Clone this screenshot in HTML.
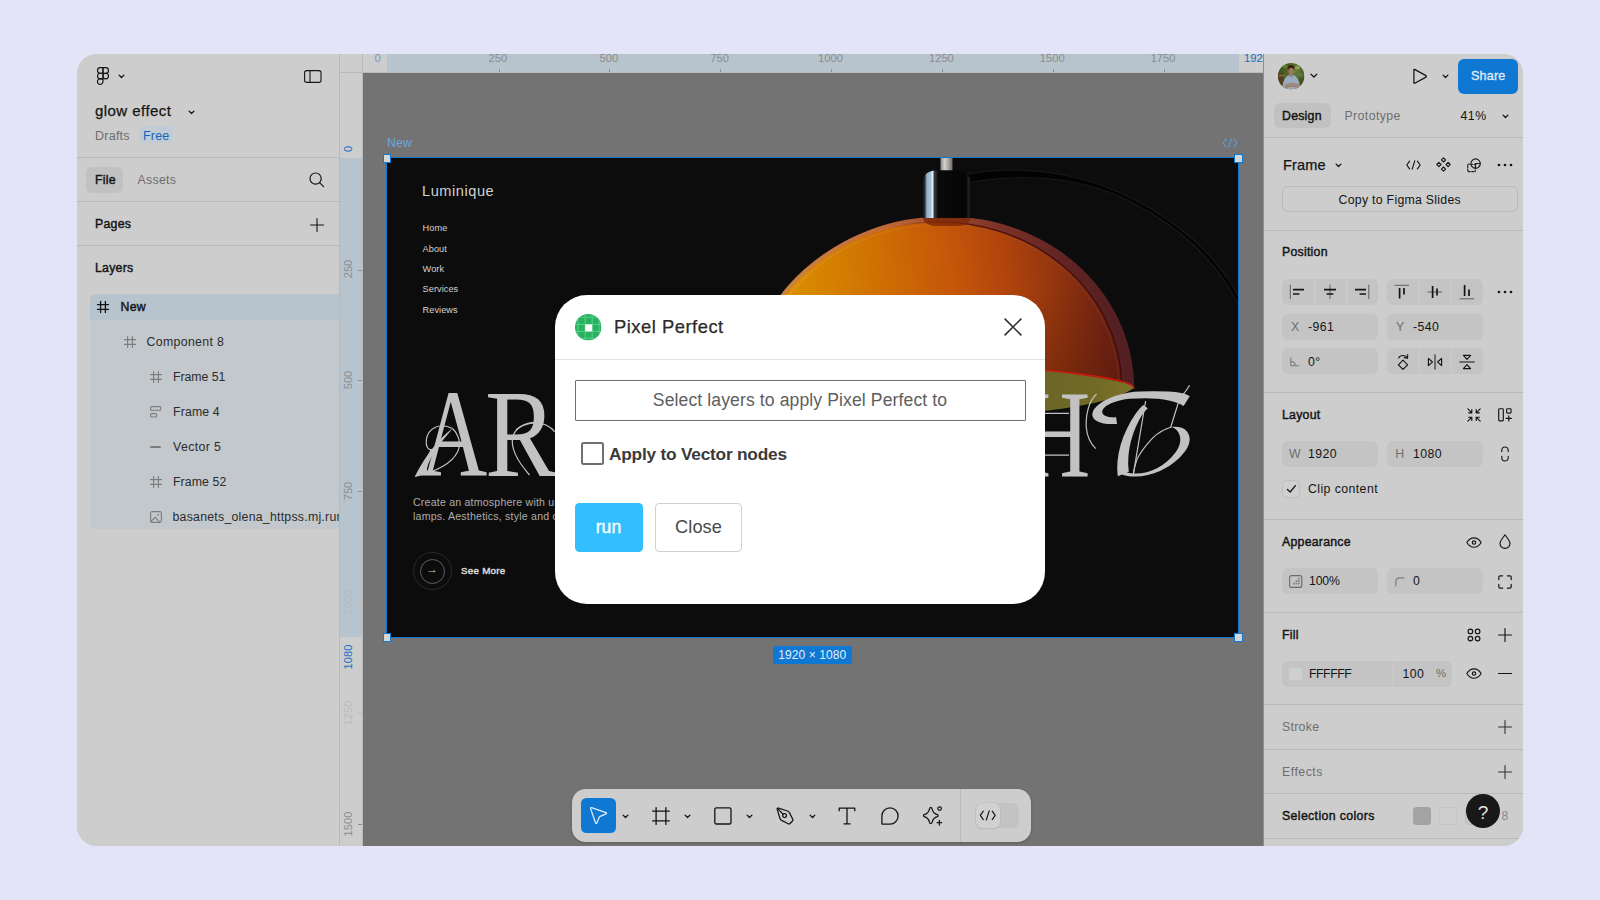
<!DOCTYPE html>
<html lang="en">
<head>
<meta charset="utf-8">
<title>Pixel Perfect – Figma plugin</title>
<style>
*{box-sizing:border-box;margin:0;padding:0}
html,body{width:1600px;height:900px;overflow:hidden}
body{background:#e3e4f8;font-family:"Liberation Sans",sans-serif;position:relative;color:#141414;font-size:12px}
.abs{position:absolute}
#win{position:absolute;left:77px;top:54px;width:1446px;height:792px;border-radius:20px;overflow:hidden;background:#cdcdcd}
/* everything inside #win is positioned in PAGE coordinates via this shifted layer */
#pg{position:absolute;left:-77px;top:-54px;width:1600px;height:900px}
.t{position:absolute;white-space:nowrap;line-height:1;transform:translateY(-50%)}
.b{font-weight:normal;-webkit-text-stroke:.42px currentColor;letter-spacing:.25px !important}
.bb{font-weight:bold}
.g{color:#6e6e6e}
.hl{position:absolute;height:1px;background:#b9b9b9}
.vl{position:absolute;width:1px;background:#b9b9b9}
.fld{position:absolute;height:26px;border-radius:6px;background:#c4c4c4}
svg{position:absolute;overflow:visible}
.ic{stroke:#141414;fill:none;stroke-width:1.1;stroke-linecap:round;stroke-linejoin:round}
.icg{stroke:#7c7c7c;fill:none;stroke-width:1.1;stroke-linecap:round;stroke-linejoin:round}
/* rulers */
.rt{position:absolute;font-size:11.2px;color:#8d8d8d;line-height:1;white-space:nowrap}
.rh{transform:translate(-50%,0)}
.rv{transform:translate(-50%,-50%) rotate(-90deg)}
.nv{font-size:9.2px;letter-spacing:.05px;color:#d2d2d2}
.hd{position:absolute;top:372px;font-family:"Liberation Serif",serif;font-size:125px;line-height:1;color:#c2c2c2;transform:scaleX(.78);transform-origin:0 0;white-space:nowrap}
/* modal */
#modal{position:absolute;left:555px;top:295px;width:490px;height:309px;border-radius:32px;background:#fff}
</style>
</head>
<body>
<div id="win"><div id="pg">

<!-- ================= LEFT PANEL ================= -->
<div id="left" class="abs" style="left:77px;top:54px;width:262px;height:792px;background:#cdcdcd"></div>
<div class="vl" style="left:339px;top:54px;height:792px"></div>
<!--LEFT-BEGIN-->
<!-- figma logo -->
<svg style="left:97px;top:67px" width="12" height="18" viewBox="0 0 12 18"><g style="stroke-width:1.15" class="ic"><path d="M6,.6H3.3a2.8,2.8 0 0 0 0,5.6H6Z"/><path d="M6,.6H8.7a2.8,2.8 0 0 1 0,5.6H6Z"/><path d="M6,6.2H3.3a2.8,2.8 0 0 0 0,5.6H6Z"/><circle cx="8.7" cy="9" r="2.8"/><path d="M6,11.8H3.3a2.8,2.8 0 1 0 2.7,2.8Z"/></g></svg>
<svg style="left:117.5px;top:74px" width="7" height="5" viewBox="0 0 7 5"><path style="stroke-width:1.3" class="ic" d="M1.1,1.1 3.5,3.5 5.9,1.1"/></svg>
<!-- sidebar toggle -->
<svg style="left:304px;top:70px" width="18" height="13" viewBox="0 0 18 13"><rect class="ic" x=".6" y=".6" width="16.4" height="11.8" rx="2.2"/><path class="ic" d="M6,.6V12.4"/></svg>
<div class="t" style="left:95px;top:110.3px;font-size:15px;letter-spacing:.45px;-webkit-text-stroke:.25px #141414">glow effect</div>
<svg style="left:187.5px;top:109.5px" width="7" height="5" viewBox="0 0 7 5"><path style="stroke-width:1.3" class="ic" d="M1.1,1.1 3.5,3.5 5.9,1.1"/></svg>
<div class="t g" style="left:95px;top:135.5px;font-size:12.5px;letter-spacing:.25px">Drafts</div>
<div class="abs" style="left:139px;top:126px;width:34px;height:17px;border-radius:4px;background:#c0cbd6"></div>
<div class="t" style="left:143px;top:135.5px;font-size:12.5px;letter-spacing:.2px;color:#1266b8">Free</div>
<div class="hl" style="left:77px;top:157px;width:262px"></div>
<!-- tabs -->
<div class="abs" style="left:86px;top:167px;width:37px;height:25.5px;border-radius:6px;background:#c1c1c1"></div>
<div class="t b" style="left:95px;top:180px;font-size:12.3px;letter-spacing:.15px">File</div>
<div class="t g" style="left:137.5px;top:180px;font-size:12.3px;letter-spacing:.3px">Assets</div>
<svg style="left:308.5px;top:171.5px" width="16" height="16" viewBox="0 0 16 16"><circle style="stroke-width:1.2" class="ic" cx="6.6" cy="6.6" r="5.6"/><path style="stroke-width:1.2" class="ic" d="M10.8,10.8 14.6,14.6"/></svg>
<div class="hl" style="left:77px;top:201px;width:262px"></div>
<div class="t b" style="left:95px;top:224px;font-size:12.3px;letter-spacing:.15px">Pages</div>
<svg style="left:310px;top:217.5px" width="14" height="14" viewBox="0 0 14 14"><path class="ic" d="M7,.5V13.5M.5,7H13.5"/></svg>
<div class="hl" style="left:77px;top:245px;width:262px"></div>
<div class="t b" style="left:95px;top:268px;font-size:12.3px;letter-spacing:.15px">Layers</div>
<!-- layer rows -->
<div class="abs" style="left:90px;top:294px;width:249px;height:235px;border-radius:6px 0 0 6px;background:#c3c8cd"></div>
<div class="abs" style="left:90px;top:294px;width:249px;height:26px;border-radius:6px 0 0 0;background:#b7c3cd"></div>
<svg style="left:97px;top:301px" width="12" height="12" viewBox="0 0 12 12"><path style="stroke-width:1.3" class="ic" d="M3.6,.5V11.5M8.4,.5V11.5M.5,3.6H11.5M.5,8.4H11.5"/></svg>
<div class="t b" style="left:120.5px;top:307px;font-size:12.3px;letter-spacing:.15px">New</div>
<svg style="left:123.5px;top:336px" width="12" height="12" viewBox="0 0 12 12"><path class="icg" d="M3.6,.5V11.5M8.4,.5V11.5M.5,3.6H11.5M.5,8.4H11.5"/></svg>
<div class="t" style="left:146.5px;top:342px;font-size:12.3px;letter-spacing:.35px;color:#2b2b2b">Component 8</div>
<svg style="left:149.5px;top:371px" width="12" height="12" viewBox="0 0 12 12"><path class="icg" d="M3.6,.5V11.5M8.4,.5V11.5M.5,3.6H11.5M.5,8.4H11.5"/></svg>
<div class="t" style="left:173px;top:377px;font-size:12.3px;letter-spacing:-.05px;color:#2b2b2b">Frame 51</div>
<svg style="left:149.5px;top:405.5px" width="12" height="12" viewBox="0 0 12 12"><rect class="icg" x=".6" y=".6" width="10.2" height="3.6" rx="1"/><rect class="icg" x=".6" y="7.6" width="6" height="3.4" rx="1"/></svg>
<div class="t" style="left:173px;top:412px;font-size:12.3px;letter-spacing:.15px;color:#2b2b2b">Frame 4</div>
<div class="abs" style="left:150px;top:446px;width:11px;height:1.6px;border-radius:1px;background:#7c7c7c"></div>
<div class="t" style="left:173px;top:447px;font-size:12.3px;letter-spacing:.4px;color:#2b2b2b">Vector 5</div>
<svg style="left:149.5px;top:475.5px" width="12" height="12" viewBox="0 0 12 12"><path class="icg" d="M3.6,.5V11.5M8.4,.5V11.5M.5,3.6H11.5M.5,8.4H11.5"/></svg>
<div class="t" style="left:173px;top:481.5px;font-size:12.3px;letter-spacing:.1px;color:#2b2b2b">Frame 52</div>
<svg style="left:149.5px;top:510.5px" width="12" height="12" viewBox="0 0 12 12"><rect class="icg" x=".6" y=".6" width="10.8" height="10.8" rx="1.6"/><path class="icg" d="M.8,10.6 5.2,6.2 9.6,11.2"/><circle cx="8.2" cy="3.8" r=".9" fill="#7c7c7c"/></svg>
<div class="abs" style="left:172.5px;top:506px;width:166.5px;height:22px;overflow:hidden"><div class="t" style="left:0;top:10.5px;font-size:12.3px;letter-spacing:.25px;color:#2b2b2b">basanets_olena_httpss.mj.run</div></div>
<!--LEFT-END-->

<!-- ================= RULERS + CANVAS ================= -->
<div class="abs" style="left:363px;top:73px;width:901px;height:773px;background:#737373"></div>
<div class="abs" style="left:340px;top:54px;width:924px;height:18px;background:#cdcdcd"></div>
<div class="abs" style="left:340px;top:54px;width:22px;height:792px;background:#cdcdcd"></div>
<div class="hl" style="left:340px;top:72px;width:924px"></div>
<div class="vl" style="left:362px;top:54px;height:792px"></div>
<!--RULER-BEGIN-->
<div class="abs" style="left:387px;top:54px;width:851.5px;height:18px;background:#b7c3cd"></div>
<div class="abs" style="left:340px;top:158px;width:22px;height:479px;background:#b7c3cd"></div>
<div class="rt rh" style="left:497.9px;top:53px">250</div>
<div class="abs" style="left:498.5px;top:68.5px;width:1px;height:3.5px;background:#8a8f94"></div>
<div class="rt rh" style="left:608.8px;top:53px">500</div>
<div class="abs" style="left:609.3px;top:68.5px;width:1px;height:3.5px;background:#8a8f94"></div>
<div class="rt rh" style="left:719.6px;top:53px">750</div>
<div class="abs" style="left:720.2px;top:68.5px;width:1px;height:3.5px;background:#8a8f94"></div>
<div class="rt rh" style="left:830.5px;top:53px">1000</div>
<div class="abs" style="left:831.1px;top:68.5px;width:1px;height:3.5px;background:#8a8f94"></div>
<div class="rt rh" style="left:941.4px;top:53px">1250</div>
<div class="abs" style="left:942.0px;top:68.5px;width:1px;height:3.5px;background:#8a8f94"></div>
<div class="rt rh" style="left:1052.3px;top:53px">1500</div>
<div class="abs" style="left:1052.9px;top:68.5px;width:1px;height:3.5px;background:#8a8f94"></div>
<div class="rt rh" style="left:1163.1px;top:53px">1750</div>
<div class="abs" style="left:1163.7px;top:68.5px;width:1px;height:3.5px;background:#8a8f94"></div>
<div class="rt" style="left:374.5px;top:53px;color:#6d9bcb">0</div>
<div class="abs" style="left:1244px;top:53px;width:19.5px;height:14px;overflow:hidden"><div class="rt" style="left:0;top:0;color:#1571c9">1920</div></div>
<div class="rt rv" style="left:348.5px;top:269.4px;color:#8d8d8d">250</div>
<div class="abs" style="left:358px;top:269.6px;width:3.5px;height:1px;background:#8a8f94"></div>
<div class="rt rv" style="left:348.5px;top:380.2px;color:#8d8d8d">500</div>
<div class="abs" style="left:358px;top:380.4px;width:3.5px;height:1px;background:#8a8f94"></div>
<div class="rt rv" style="left:348.5px;top:491.1px;color:#8d8d8d">750</div>
<div class="abs" style="left:358px;top:491.3px;width:3.5px;height:1px;background:#8a8f94"></div>
<div class="rt rv" style="left:348.5px;top:602.0px;color:#b2bcc4">1000</div>
<div class="abs" style="left:358px;top:602.2px;width:3.5px;height:1px;background:#b5b9bd"></div>
<div class="rt rv" style="left:348.5px;top:712.9px;color:#bcbcbc">1250</div>
<div class="abs" style="left:358px;top:713.1px;width:3.5px;height:1px;background:#b5b9bd"></div>
<div class="rt rv" style="left:348.5px;top:823.8px;color:#8d8d8d">1500</div>
<div class="abs" style="left:358px;top:824.0px;width:3.5px;height:1px;background:#8a8f94"></div>
<div class="rt rv" style="left:348.5px;top:149px;color:#1571c9">0</div>
<div class="rt rv" style="left:348.5px;top:656.5px;color:#1571c9">1080</div>
<!--RULER-END-->

<!--CANVAS-BEGIN-->
<!-- frame label -->
<div class="t" style="left:387px;top:143px;font-size:12.3px;letter-spacing:.2px;color:#6ea6da">New</div>
<svg style="left:1221.5px;top:137.6px" width="16" height="10" viewBox="0 0 16 10"><path d="M4,1.2 1,5 4,8.8M12,1.2 15,5 12,8.8M9.4,.8 6.6,9.2" fill="none" stroke="#5d9ad6" stroke-width="1.2" stroke-linecap="round" stroke-linejoin="round"/></svg>
<!-- frame -->
<div id="frame" class="abs" style="left:387px;top:158px;width:851.5px;height:479px;background:#0c0c0c;overflow:hidden">
<svg style="left:-387px;top:-158px" width="1600" height="900" viewBox="0 0 1600 900">
<defs>
<linearGradient id="gd" gradientUnits="userSpaceOnUse" x1="770" y1="330" x2="1140" y2="300">
<stop offset="0" stop-color="#e09a00"/><stop offset=".16" stop-color="#d68400"/><stop offset=".36" stop-color="#cd6a04"/><stop offset=".52" stop-color="#c4560a"/><stop offset=".66" stop-color="#b0440c"/><stop offset=".8" stop-color="#90340f"/><stop offset=".92" stop-color="#702212"/><stop offset="1" stop-color="#5e1b18"/>
</linearGradient>
<radialGradient id="gsh" gradientUnits="userSpaceOnUse" cx="1075" cy="440" r="150">
<stop offset="0" stop-color="#3a0d08" stop-opacity=".5"/><stop offset="1" stop-color="#3a0d08" stop-opacity="0"/>
</radialGradient>
<linearGradient id="gcap" x1="0" x2="1" y1="0" y2="0">
<stop offset="0" stop-color="#0e0e0e"/><stop offset=".05" stop-color="#2b3238"/><stop offset=".09" stop-color="#8fb0c8"/><stop offset=".17" stop-color="#a9c6dc"/><stop offset=".21" stop-color="#e6eef4"/><stop offset=".245" stop-color="#3a3d40"/><stop offset=".33" stop-color="#0a0a0a"/><stop offset=".9" stop-color="#050505"/><stop offset=".96" stop-color="#222226"/><stop offset="1" stop-color="#0c0c0c"/>
</linearGradient>
<linearGradient id="grod" x1="0" x2="1" y1="0" y2="0">
<stop offset="0" stop-color="#8d8a85"/><stop offset=".35" stop-color="#d4d1cc"/><stop offset=".7" stop-color="#a39f99"/><stop offset="1" stop-color="#6e6b66"/>
</linearGradient>
<linearGradient id="gin" gradientUnits="userSpaceOnUse" x1="1040" y1="0" x2="1135" y2="0">
<stop offset="0" stop-color="#6c6627"/><stop offset=".6" stop-color="#716a26"/><stop offset="1" stop-color="#7d7428"/>
</linearGradient>
<clipPath id="cpd"><path d="M700,150 H1200 V386 L1134.1,385.8 C1124,382 1095,375 1045,370.5 C1000,366.5 900,372 740,432 L700,445Z"/></clipPath>
<linearGradient id="gb" gradientUnits="userSpaceOnUse" x1="770" y1="0" x2="1140" y2="0">
<stop offset="0" stop-color="#cc8a3a"/><stop offset=".2" stop-color="#c87a42"/><stop offset=".4" stop-color="#c0683a"/><stop offset=".55" stop-color="#a24c30"/><stop offset=".7" stop-color="#7e3228"/><stop offset=".85" stop-color="#622424"/><stop offset="1" stop-color="#501e22"/>
</linearGradient>
<linearGradient id="gs" gradientUnits="userSpaceOnUse" x1="900" y1="0" x2="1000" y2="0">
<stop offset="0" stop-color="#3d0b0b" stop-opacity="0"/><stop offset="1" stop-color="#3d0b0b" stop-opacity=".95"/>
</linearGradient>
<linearGradient id="gs2" gradientUnits="userSpaceOnUse" x1="760" y1="0" x2="1130" y2="0">
<stop offset="0" stop-color="#e0b060" stop-opacity=".55"/><stop offset=".4" stop-color="#d89050" stop-opacity=".25"/><stop offset=".65" stop-color="#a05038" stop-opacity=".2"/><stop offset="1" stop-color="#7a3a30" stop-opacity=".5"/>
</linearGradient>
</defs>
<!-- cable -->
<path d="M968,173.6 C1010,165.9 1070,168.4 1125.500,194.800 C1181,221 1222.200,260.600 1242.200,303 L1237.800,305 C1217.800,263.400 1179,225.200 1124.500,199.200 C1070,173.600 1010,175.100 968,183.400Z" fill="#1f1b1e"/>
<path d="M968,174.400 C1010,166.700 1070,169.200 1125,195.600 C1180,221.600 1221.400,261 1241.400,303.400 L1238.600,304.600 C1218.600,262.900 1180,224.400 1125,198.400 C1070,172.800 1010,174.300 968,182.600Z" fill="#030303"/>
<!-- rod -->
<rect x="940.5" y="158" width="12" height="14" fill="url(#grod)"/>
<!-- interior -->
<path d="M1000,366 C1030,368 1090,374 1120,381 C1130,383.5 1134.5,386 1134,388 C1120,398 1092,405 1045,411 L1000,414Z" fill="url(#gin)"/>
<!-- dome -->
<g clip-path="url(#cpd)">
<ellipse cx="938.7" cy="395.4" rx="196.15" ry="178.64" transform="rotate(-10.56 938.7 395.4)" fill="url(#gb)"/>
<ellipse cx="937.2" cy="389.3" rx="184.6" ry="167.3" transform="rotate(-2.58 937.2 389.3)" fill="url(#gd)"/>
<ellipse cx="937.2" cy="389.3" rx="184.6" ry="167.3" transform="rotate(-2.58 937.2 389.3)" fill="url(#gsh)"/>
<ellipse cx="937.2" cy="389.3" rx="184.6" ry="167.3" transform="rotate(-2.58 937.2 389.3)" fill="none" stroke="url(#gs)" stroke-width="1.4"/>
<ellipse cx="937.2" cy="389.3" rx="181.8" ry="164.5" transform="rotate(-2.58 937.2 389.3)" fill="none" stroke="url(#gs2)" stroke-width="1"/>
</g>
<!-- rim -->
<path d="M1000,366.5 C1030,368 1090,374 1120,381 C1130,383.5 1134.5,386 1134,388.5" fill="none" stroke="#c8180e" stroke-width="1.7"/>
<!-- cap -->
<path d="M922.500,184 C922.500,173 929,170.300 940,170.300 H953 C964,170.300 970.700,173 970.700,184 V218 H922.500Z" fill="url(#gcap)"/>
<path d="M923,218 H970.5 V219 Q968,226 958,226 H936 Q926,226 923,219Z" fill="#7a2404" opacity=".75"/>
</svg>
<!--FT-BEGIN-->
<div class="abs" style="left:-387px;top:-158px;width:1600px;height:900px;color:#c2c2c2">
<div class="t" style="left:422px;top:190.5px;font-size:14.6px;letter-spacing:.55px;color:#d0d0d0">Luminique</div>
<div class="t nv" style="left:422.6px;top:229.1px">Home</div>
<div class="t nv" style="left:422.6px;top:249.6px">About</div>
<div class="t nv" style="left:422.6px;top:269.9px">Work</div>
<div class="t nv" style="left:422.6px;top:290.3px">Services</div>
<div class="t nv" style="left:422.6px;top:310.6px">Reviews</div>
<!-- headline -->
<div class="hd" style="left:420px;transform:scaleX(.745)">A</div>
<div class="hd" style="left:484.5px;transform:scaleX(.86)">R</div>
<div class="hd" style="left:553px">C</div>
<div class="hd" style="left:1019.5px">H</div>
<div class="hd" style="left:1086px;top:388.5px;font-family:'DejaVu Math TeX Gyre','DejaVu Serif',serif;font-size:100px;transform:matrix(1.1,0,-.1,1.08,0,0)">𝒯</div>
<svg style="left:0;top:0" width="1600" height="900" viewBox="0 0 1600 900">
<g fill="none" stroke="#c2c2c2" stroke-width="1.2">
<!-- A swash -->
<path d="M452.5,428.5 C440,422 428,428 426.3,440 C425.5,447 428.5,450.5 432,449.5"/>
<path d="M452.5,428.5 C459,435 461.5,444 457.5,452 C451,465 434,472 415,476.5"/>
<path d="M426.5,471.5 C425.5,463 428,456 431,450"/>
<!-- H crossbars -->
<path d="M1030,413.3H1069M1030,434.3H1069M1030,455.2H1069"/>
<!-- R / C hairline loops -->
<path d="M536,422 C525,422.5 515,428 512.8,437 C510,449 519,463 529.5,475"/><path d="M516,430 C524,423 536,421 546,425 C550,426.800 553,429.500 555,432"/>
<!-- T ornaments -->
<path d="M1189.6,385.2 C1186,391 1183,395 1180,397.4 L1170.8,427"/>
<path d="M1145.6,401 L1133.3,474.7"/>
<path d="M1096.5,394 C1089,401 1085.5,414 1086.3,427.8 C1087.2,437 1091,444 1095.7,448.7"/>
<path d="M1171.6,427 C1164,429 1158,433 1152.8,437.9 C1146,445 1140,453 1136.9,459.6 C1135,465 1133.8,470 1133.3,474.7"/>
</g>
<!-- A leaf (thick) -->
<path d="M415,476.6 C420,466 427,455 434,446.5 C440,439 446,433 452.5,428.5 C447,435.5 441,442 436,449.5 C431,457 427,465.5 426.3,472.5 C422.5,474 419,475.5 415,476.6Z" fill="#c2c2c2"/>
<!-- T bowl (ornamental loop) -->
<path d="M1118,472.5 C1122,475 1126,476 1131,476.4 C1141,477.2 1151,475 1160,471 C1169,467 1177,461 1183,453.8 C1187.5,448.5 1190,443 1189.6,437.9 C1189,433 1186,429.5 1181.7,427.8 C1178.5,426.6 1175,426.5 1171.6,427 C1176,428.5 1179.500,432 1180.200,437.900 C1180.8,443 1178.5,448.5 1174.4,453.8 C1170,459.5 1164,464.5 1157,468.200 C1149,472.5 1140,474.300 1131,473.300 C1127,472.800 1123,471 1120,468.500Z" fill="#c2c2c2"/>
</svg>
<div class="t" style="left:413px;top:502px;font-size:10.6px;letter-spacing:.2px;color:#adadad">Create an atmosphere with unique</div>
<div class="t" style="left:413px;top:516px;font-size:10.6px;letter-spacing:.2px;color:#adadad">lamps. Aesthetics, style and comfort</div>
<div class="abs" style="left:413.2px;top:551.7px;width:38.5px;height:38.5px;border-radius:50%;border:1px solid #292929"></div>
<div class="abs" style="left:420px;top:558.5px;width:25px;height:25px;border-radius:50%;border:1px solid #5e5e5e"></div>
<div class="t" style="left:432px;top:570.3px;transform:translate(-50%,-50%);font-size:11.5px;color:#cfcfcf">→</div>
<div class="t b" style="left:461px;top:571px;font-size:9.8px;letter-spacing:.05px;color:#dedede">See More</div>
</div>
<!--FT-END-->
</div>
<!-- selection outline + handles -->
<div class="abs" style="left:385.8px;top:157px;width:853.4px;height:480.8px;border:1.3px solid #1079d3"></div>
<div class="abs" style="left:382.6px;top:154.2px;width:8.4px;height:8.4px;background:#d6d6d6;border:1.3px solid #1079d3"></div>
<div class="abs" style="left:1234.4px;top:154.2px;width:8.4px;height:8.4px;background:#d6d6d6;border:1.3px solid #1079d3"></div>
<div class="abs" style="left:382.6px;top:633.4px;width:8.4px;height:8.4px;background:#d6d6d6;border:1.3px solid #1079d3"></div>
<div class="abs" style="left:1234.4px;top:633.4px;width:8.4px;height:8.4px;background:#d6d6d6;border:1.3px solid #1079d3"></div>
<!-- size badge -->
<div class="abs" style="left:773px;top:645.5px;width:78.5px;height:18.5px;border-radius:2.5px;background:#0e78d2"></div>
<div class="t" style="left:812.3px;top:655px;transform:translate(-50%,-50%);font-size:12px;letter-spacing:.1px;color:#e4eef8">1920 × 1080</div>
<!--CANVAS-END-->

<!-- ================= RIGHT PANEL ================= -->
<div class="abs" style="left:1264px;top:54px;width:259px;height:792px;background:#cdcdcd"></div>
<div class="vl" style="left:1263px;top:54px;height:792px;background:#8f8f8f"></div>
<!--RIGHT-BEGIN-->
<!-- avatar -->
<svg style="left:1277.7px;top:62.7px" width="26.4" height="26.4" viewBox="0 0 26.4 26.4">
<defs><clipPath id="cpa"><circle cx="13.2" cy="13.2" r="13.2"/></clipPath>
<radialGradient id="gav" cx=".62" cy=".3" r=".8"><stop offset="0" stop-color="#6c8736"/><stop offset=".5" stop-color="#465c20"/><stop offset="1" stop-color="#2e3b18"/></radialGradient></defs>
<g clip-path="url(#cpa)"><rect width="26.4" height="26.4" fill="url(#gav)"/>
<ellipse cx="19.5" cy="4.500" rx="2.600" ry="2" fill="#9db86a" opacity=".7"/><ellipse cx="7" cy="3.500" rx="2.400" ry="1.600" fill="#6f8f3a" opacity=".7"/>
<ellipse cx="22" cy="12" rx="3.500" ry="2" fill="#5e7a5a" opacity=".7"/>
<path d="M0,9 5,11 6,26.400H0Z" fill="#5a3d22" opacity=".85"/>
<path d="M1,11.500H8V13.500H1Z" fill="#7f8a4a" opacity=".6"/>
<ellipse cx="13" cy="5" rx="3.400" ry="2.900" fill="#3a2219"/>
<ellipse cx="13.100" cy="8" rx="2.700" ry="3.300" fill="#a27562"/>
<path d="M9.700,5.600 C10.500,3.600 15.500,3.400 16.300,5.600 C15,4.900 11,5 9.700,5.600Z" fill="#3a2219"/>
<path d="M4.300,26.400 C4.400,17 8.200,11.600 13.100,11.800 C18.400,11.600 22,17 22.300,26.400Z" fill="#9aabc0"/>
<path d="M11.500,11.300 13.100,14.600 14.800,11.300Z" fill="#a27562"/>
<path d="M11.500,11.300 13.100,14.600 10.600,13.400ZM14.800,11.300 13.100,14.600 15.700,13.400Z" fill="#8192ab"/>
<path d="M6.600,21.600 C10,19.600 17,19.600 21.900,21.600 L21.500,25.200 C17,23.700 11,23.700 7.400,25.700Z" fill="#a58068"/>
<path d="M7,22.400 C11,20.800 16,21 20.800,22.600" fill="none" stroke="#8a9bb3" stroke-width=".9"/></g></svg>
<svg style="left:1309.6px;top:73.2px" width="8" height="6" viewBox="0 0 8 6"><path style="stroke-width:1.3" class="ic" d="M.9,1.100 3.900,4 6.900,1.100"/></svg>
<!-- play -->
<svg style="left:1412.5px;top:68px" width="15" height="17" viewBox="0 0 15 17"><path style="stroke-width:1.25" class="ic" d="M1.6,1.4 Q.9,1 .9,1.9 V14.7 Q.9,15.6 1.7,15.2 L13,9.1 Q13.8,8.3 13,7.6Z"/></svg>
<svg style="left:1441.5px;top:74px" width="7" height="5" viewBox="0 0 7 5"><path style="stroke-width:1.3" class="ic" d="M1.1,1.1 3.5,3.5 5.9,1.1"/></svg>
<div class="abs" style="left:1458.4px;top:59px;width:59.6px;height:34.6px;border-radius:6px;background:#0e78d2"></div>
<div class="t" style="left:1488.2px;top:76.1px;transform:translate(-50%,-50%);font-size:12.6px;letter-spacing:.2px;color:#e2ecf6;-webkit-text-stroke:.3px #e2ecf6">Share</div>
<!-- tabs -->
<div class="abs" style="left:1273.6px;top:102.6px;width:57.4px;height:25.6px;border-radius:6px;background:#c1c1c1"></div>
<div class="t b" style="left:1282px;top:115.8px;font-size:12.3px;letter-spacing:.1px">Design</div>
<div class="t g" style="left:1344.5px;top:115.8px;font-size:12.3px;letter-spacing:.4px">Prototype</div>
<div class="t" style="left:1460.5px;top:115.8px;font-size:12.3px;letter-spacing:.5px">41%</div>
<svg style="left:1501.5px;top:113.5px" width="7" height="5" viewBox="0 0 7 5"><path style="stroke-width:1.3" class="ic" d="M1.1,1.1 3.5,3.5 5.9,1.1"/></svg>
<div class="hl" style="left:1264px;top:137px;width:259px"></div>
<!-- Frame header -->
<div class="t" style="left:1283px;top:164.5px;font-size:14.5px;letter-spacing:.15px;-webkit-text-stroke:.25px #141414">Frame</div>
<svg style="left:1334.5px;top:162.5px" width="7" height="5" viewBox="0 0 7 5"><path style="stroke-width:1.3" class="ic" d="M1.1,1.1 3.5,3.5 5.9,1.1"/></svg>
<svg style="left:1405.5px;top:159.5px" width="15" height="10" viewBox="0 0 15 10"><path style="stroke-width:1.15" class="ic" d="M3.6,1.2 .8,5 3.6,8.8M11.4,1.2 14.2,5 11.4,8.8M8.8,.8 6.2,9.2"/></svg>
<svg style="left:1436px;top:157px" width="15" height="15" viewBox="0 0 15 15"><g style="stroke-width:1.1" class="ic"><path d="M7.5,.8 9.6,2.9 7.5,5 5.4,2.9Z"/><path d="M7.5,10 9.6,12.1 7.5,14.2 5.4,12.1Z"/><path d="M2.9,5.4 5,7.5 2.9,9.6 .8,7.5Z"/><path d="M12.1,5.4 14.2,7.5 12.1,9.6 10,7.5Z"/></g></svg>
<svg style="left:1467px;top:157.5px" width="15" height="15" viewBox="0 0 15 15"><g style="stroke-width:1.1" class="ic"><circle cx="8.6" cy="5.6" r="4.7"/><path d="M8.6,5.6V10.3M8.6,5.6H13.3" stroke-width="1"/><rect x=".8" y="6.2" width="7.4" height="7.4" stroke-dasharray="1.8 1.5"/></g></svg>
<svg style="left:1497px;top:162.5px" width="16" height="4" viewBox="0 0 16 4"><g fill="#141414"><circle cx="2" cy="2" r="1.35"/><circle cx="8" cy="2" r="1.35"/><circle cx="14" cy="2" r="1.35"/></g></svg>
<div class="abs" style="left:1282px;top:186.4px;width:235.6px;height:25.4px;border-radius:6px;border:1px solid #bbb"></div>
<div class="t" style="left:1399.8px;top:199.9px;transform:translate(-50%,-50%);font-size:12.3px;letter-spacing:.28px">Copy to Figma Slides</div>
<div class="hl" style="left:1264px;top:230px;width:259px"></div>
<!-- Position -->
<div class="t b" style="left:1282px;top:252.4px;font-size:12.3px;letter-spacing:.1px">Position</div>
<div class="fld" style="left:1282px;top:278.6px;width:96px"></div>
<div class="fld" style="left:1387px;top:278.6px;width:96px"></div>
<div class="vl" style="left:1313.6px;top:278.6px;height:26px;background:#cdcdcd"></div><div class="vl" style="left:1346px;top:278.6px;height:26px;background:#cdcdcd"></div>
<div class="vl" style="left:1418.6px;top:278.6px;height:26px;background:#cdcdcd"></div><div class="vl" style="left:1451px;top:278.6px;height:26px;background:#cdcdcd"></div>
<svg style="left:1289px;top:284px" width="16" height="16" viewBox="0 0 16 16"><path d="M1.3,1V14.6" style="stroke:#555;stroke-width:.9" class="ic"/><path style="stroke-width:1.7;stroke-linecap:butt" class="ic" d="M4,5.6H15M4,10H10.4"/></svg>
<svg style="left:1322px;top:284px" width="16" height="16" viewBox="0 0 16 16"><path d="M8,1V14.6" style="stroke:#555;stroke-width:.9" class="ic"/><path style="stroke-width:1.7;stroke-linecap:butt" class="ic" d="M2,5.6H14M4.6,10H11.4"/></svg>
<svg style="left:1354px;top:284px" width="16" height="16" viewBox="0 0 16 16"><path d="M14.8,1V14.6" style="stroke:#555;stroke-width:.9" class="ic"/><path style="stroke-width:1.7;stroke-linecap:butt" class="ic" d="M1,5.6H12M5.6,10H12"/></svg>
<svg style="left:1394px;top:283.5px" width="16" height="16" viewBox="0 0 16 16"><path d="M1,1.3H14.6" style="stroke:#555;stroke-width:.9" class="ic"/><path style="stroke-width:1.7;stroke-linecap:butt" class="ic" d="M5.6,4V14.6M10,4V10.4"/></svg>
<svg style="left:1426.5px;top:283.5px" width="16" height="16" viewBox="0 0 16 16"><path d="M1,8H14.6" style="stroke:#555;stroke-width:.9" class="ic"/><path style="stroke-width:1.7;stroke-linecap:butt" class="ic" d="M5.6,2V14M10,4.6V11.4"/></svg>
<svg style="left:1459px;top:283.5px" width="16" height="16" viewBox="0 0 16 16"><path d="M1,14.8H14.6" style="stroke:#555;stroke-width:.9" class="ic"/><path style="stroke-width:1.7;stroke-linecap:butt" class="ic" d="M5.6,1V12M10,5.6V12"/></svg>
<svg style="left:1497px;top:289.5px" width="16" height="4" viewBox="0 0 16 4"><g fill="#141414"><circle cx="2" cy="2" r="1.35"/><circle cx="8" cy="2" r="1.35"/><circle cx="14" cy="2" r="1.35"/></g></svg>
<div class="fld" style="left:1282px;top:313.6px;width:96px"></div>
<div class="fld" style="left:1387px;top:313.6px;width:96px"></div>
<div class="t g" style="left:1291px;top:326.9px;font-size:12.3px">X</div><div class="t" style="left:1308px;top:326.9px;font-size:12.3px;letter-spacing:.45px">-961</div>
<div class="t g" style="left:1396px;top:326.9px;font-size:12.3px">Y</div><div class="t" style="left:1413px;top:326.9px;font-size:12.3px;letter-spacing:.45px">-540</div>
<div class="fld" style="left:1282px;top:348.4px;width:96px"></div>
<div class="fld" style="left:1387px;top:348.4px;width:96px"></div>
<div class="vl" style="left:1418.6px;top:348.4px;height:26px;background:#cdcdcd"></div><div class="vl" style="left:1451px;top:348.4px;height:26px;background:#cdcdcd"></div>
<svg style="left:1290px;top:356.5px" width="10" height="10" viewBox="0 0 10 10"><path style="stroke-width:1.1" class="icg" d="M.8,.8V8.8H8.8M.8,4.4 Q5,4.6 5.2,8.8"/></svg>
<div class="t" style="left:1308px;top:361.7px;font-size:12.3px;letter-spacing:.4px">0°</div>
<svg style="left:1394.5px;top:352.5px" width="16" height="18" viewBox="0 0 16 18"><g style="stroke-width:1.15" class="ic"><path d="M8,7.2 12.6,11.8 8,16.4 3.4,11.8Z"/><path d="M3.6,5 C5.4,1.6 10.6,1.6 12.4,5"/><path d="M12.7,1.6 12.5,5.1 9.2,4.6"/></g></svg>
<svg style="left:1427px;top:353.5px" width="16" height="16" viewBox="0 0 16 16"><g style="stroke-width:1.15" class="ic"><path d="M8,.8V15.2" stroke-width="1"/><path d="M1.4,4.4V11.6L5.4,8Z"/><path d="M14.6,4.4V11.6L10.6,8Z"/></g></svg>
<svg style="left:1459px;top:353.5px" width="16" height="16" viewBox="0 0 16 16"><g style="stroke-width:1.15" class="ic"><path d="M.8,8H15.2" stroke-width="1"/><path d="M4.4,1.4H11.6L8,5.4Z"/><path d="M4.4,14.6H11.6L8,10.6Z"/></g></svg>
<div class="hl" style="left:1264px;top:392px;width:259px"></div>
<!-- Layout -->
<div class="t b" style="left:1282px;top:415px;font-size:12.3px;letter-spacing:.1px">Layout</div>
<svg style="left:1467px;top:408px" width="14" height="14" viewBox="0 0 14 14"><g style="stroke-width:1.15" class="ic"><path d="M.8,.8 4.6,4.6M1.6,4.8H4.8V1.6"/><path d="M13.2,.8 9.4,4.6M12.4,4.8H9.2V1.6"/><path d="M.8,13.2 4.6,9.4M1.6,9.2H4.8V12.4"/><path d="M13.2,13.2 9.4,9.4M12.400,9.2H9.2V12.4"/></g></svg>
<svg style="left:1497.5px;top:408px" width="15" height="14" viewBox="0 0 15 14"><g style="stroke-width:1.15" class="ic"><rect x=".7" y=".7" width="4.6" height="12.2" rx=".8"/><rect x="8.6" y=".7" width="4.4" height="4.4" rx=".8"/><path d="M10.8,7.8V13M8.2,10.4H13.4"/></g></svg>
<div class="fld" style="left:1282px;top:441px;width:96px"></div>
<div class="fld" style="left:1387px;top:441px;width:96px"></div>
<div class="t g" style="left:1289px;top:454.2px;font-size:12.3px">W</div><div class="t" style="left:1308px;top:454.2px;font-size:12.3px;letter-spacing:.45px">1920</div>
<div class="t g" style="left:1395.3px;top:454.2px;font-size:12.3px">H</div><div class="t" style="left:1413px;top:454.2px;font-size:12.3px;letter-spacing:.45px">1080</div>
<svg style="left:1501px;top:446px" width="8" height="16" viewBox="0 0 8 16"><g style="stroke-width:1.15" class="ic"><path d="M.8,5.6V4.2A3.2,3.2 0 0 1 7.2,4.2V5.6"/><path d="M.8,10.4V11.8A3.2,3.2 0 0 0 7.2,11.8V10.4"/></g></svg>
<div class="abs" style="left:1282px;top:480px;width:17.6px;height:17.6px;border-radius:4.5px;background:#cfcfcf;border:1px solid #bebebe"></div>
<svg style="left:1285.5px;top:484px" width="11" height="10" viewBox="0 0 11 10"><path style="stroke-width:1.3" class="ic" d="M1.4,5.4 4.2,8 9.4,1.6"/></svg>
<div class="t" style="left:1308px;top:489.2px;font-size:12.3px;letter-spacing:.42px">Clip content</div>
<div class="hl" style="left:1264px;top:519px;width:259px"></div>
<!-- Appearance -->
<div class="t b" style="left:1282px;top:542.2px;font-size:12.3px;letter-spacing:.05px">Appearance</div>
<svg style="left:1465.5px;top:536.5px" width="16" height="11" viewBox="0 0 16 11"><g style="stroke-width:1.15" class="ic"><path d="M.8,5.5 C3,2 5.5,.8 8,.8 C10.500,.8 13,2 15.2,5.5 C13,9 10.500,10.2 8,10.200 C5.5,10.2 3,9 .8,5.5Z"/><circle cx="8" cy="5.5" r="1.7"/></g></svg>
<svg style="left:1499px;top:534px" width="12" height="15" viewBox="0 0 12 15"><path style="stroke-width:1.15" class="ic" d="M6,.9 C8.600,4.2 11,7 11,9.4 A5,5 0 0 1 1,9.4 C1,7 3.4,4.2 6,.9Z"/></svg>
<div class="fld" style="left:1282px;top:568px;width:96px"></div>
<div class="fld" style="left:1387px;top:568px;width:96px"></div>
<svg style="left:1289px;top:575px" width="14" height="13" viewBox="0 0 14 13"><rect style="stroke:#6a6a6a" class="icg" x=".6" y=".6" width="12.200" height="11.800" rx="2"/><g fill="#7a7a7a"><rect x="9" y="3" width="1.6" height="1.6"/><rect x="6.600" y="5.400" width="1.6" height="1.6"/><rect x="9" y="5.400" width="1.6" height="1.6"/><rect x="4.200" y="7.800" width="1.6" height="1.6"/><rect x="6.600" y="7.800" width="1.6" height="1.6"/><rect x="9" y="7.800" width="1.6" height="1.6"/></g></svg>
<div class="t" style="left:1309px;top:581.3px;font-size:12.3px;letter-spacing:-.2px">100%</div>
<svg style="left:1395px;top:576.5px" width="10" height="10" viewBox="0 0 10 10"><path style="stroke-width:1.15" class="icg" d="M.8,9V4.800Q.8,.8 4.800,.8H9"/></svg>
<div class="t" style="left:1413px;top:581.3px;font-size:12.3px;letter-spacing:.4px">0</div>
<svg style="left:1497.5px;top:574.5px" width="14" height="14" viewBox="0 0 14 14"><g style="stroke-width:1.2" class="ic"><path d="M.8,4.600V2.200Q.8,.8 2.200,.8H4.600"/><path d="M9.400,.8H11.800Q13.200,.8 13.200,2.200V4.600"/><path d="M13.200,9.400V11.800Q13.200,13.200 11.800,13.200H9.400"/><path d="M4.600,13.200H2.200Q.8,13.200 .8,11.800V9.400"/></g></svg>
<div class="hl" style="left:1264px;top:612.4px;width:259px"></div>
<!-- Fill -->
<div class="t b" style="left:1282px;top:634.6px;font-size:12.3px;letter-spacing:.1px">Fill</div>
<svg style="left:1467px;top:627.500px" width="14" height="14" viewBox="0 0 14 14"><g style="stroke-width:1.15" class="ic"><circle cx="3.400" cy="3.400" r="2.300"/><circle cx="10.600" cy="3.400" r="2.300"/><circle cx="3.400" cy="10.600" r="2.300"/><circle cx="10.600" cy="10.600" r="2.300"/></g></svg>
<svg style="left:1498px;top:628px" width="14" height="14" viewBox="0 0 14 14"><path style="stroke-width:1.15" class="ic" d="M7,.5V13.5M.5,7H13.5"/></svg>
<div class="fld" style="left:1282px;top:660.600px;width:170px"></div>
<div class="vl" style="left:1393px;top:660.600px;height:26px;background:#cdcdcd"></div>
<div class="abs" style="left:1288px;top:666.500px;width:14.600px;height:14.600px;border-radius:3px;background:#cfcfcf;border:1px solid #c6c6c6"></div>
<div class="t" style="left:1309px;top:674px;font-size:12.3px;letter-spacing:-.45px">FFFFFF</div>
<div class="t" style="left:1402.500px;top:674px;font-size:12.3px;letter-spacing:.4px">100</div>
<div class="t g" style="left:1436px;top:674px;font-size:11.5px">%</div>
<svg style="left:1466px;top:668.200px" width="16" height="11" viewBox="0 0 16 11"><g style="stroke-width:1.15" class="ic"><path d="M.8,5.5 C3,2 5.5,.8 8,.8 C10.500,.8 13,2 15.2,5.5 C13,9 10.500,10.2 8,10.200 C5.5,10.2 3,9 .8,5.5Z"/><circle cx="8" cy="5.5" r="1.7"/></g></svg>
<div class="abs" style="left:1498px;top:673.200px;width:13.500px;height:1.200px;background:#141414"></div>
<div class="hl" style="left:1264px;top:704.400px;width:259px"></div>
<div class="t g" style="left:1282px;top:727.200px;font-size:12.3px;letter-spacing:.3px">Stroke</div>
<svg style="left:1498px;top:720px" width="14" height="14" viewBox="0 0 14 14"><path style="stroke:#333;stroke-width:1.1" class="ic" d="M7,.5V13.5M.5,7H13.5"/></svg>
<div class="hl" style="left:1264px;top:749.400px;width:259px"></div>
<div class="t g" style="left:1282px;top:771.800px;font-size:12.3px;letter-spacing:.5px">Effects</div>
<svg style="left:1498px;top:764.600px" width="14" height="14" viewBox="0 0 14 14"><path style="stroke:#333;stroke-width:1.1" class="ic" d="M7,.5V13.5M.5,7H13.5"/></svg>
<div class="hl" style="left:1264px;top:793.400px;width:259px"></div>
<div class="t b" style="left:1282px;top:816.300px;font-size:12.3px;letter-spacing:.37px !important">Selection colors</div>
<div class="abs" style="left:1413px;top:807px;width:17.500px;height:18px;border-radius:3.500px;background:#a3a3a3"></div>
<div class="abs" style="left:1439px;top:807px;width:17.500px;height:18px;border-radius:3.500px;background:#cfcfcf;border:1px solid #c2c2c2"></div>
<div class="abs" style="left:1465px;top:807px;width:17.500px;height:18px;border-radius:3.500px;background:#c6c6c6;border:1px solid #bdbdbd"></div>
<div class="t" style="left:1501.500px;top:816.300px;font-size:12.3px;color:#8a8a8a">8</div>
<div class="hl" style="left:1264px;top:838px;width:259px"></div>
<!-- help button -->
<div class="abs" style="left:1465.700px;top:793.700px;width:34.600px;height:34.600px;border-radius:50%;background:#181818"></div>
<div class="t" style="left:1483px;top:811.600px;transform:translate(-50%,-50%);font-size:19px;color:#e2e2e2">?</div>

<!--RIGHT-END-->

<!--TB-BEGIN-->
<div class="abs" style="left:572px;top:789px;width:459px;height:53px;border-radius:13.500px;background:#cdcdcd;box-shadow:0 1px 3px rgba(0,0,0,.18),0 0 .5px rgba(0,0,0,.3)"></div>
<div class="abs" style="left:581px;top:798px;width:34.600px;height:34.600px;border-radius:5.500px;background:#0e78d2"></div>
<svg style="left:588px;top:805px" width="21" height="21" viewBox="0 0 21 21"><path d="M2.600,3.600 Q2.200,2.200 3.600,2.600 L18,7.600 Q19.200,8.200 18,8.900 L12.200,11.300 Q11.500,11.600 11.200,12.300 L8.800,18.200 Q8.200,19.300 7.600,18Z" fill="none" stroke="#e4eef8" stroke-width="1.250" stroke-linejoin="round"/></svg>
<svg style="left:622px;top:813.500px" width="7" height="5" viewBox="0 0 7 5"><path class="ic" style="stroke-width:1.3" d="M1.1,1.1 3.5,3.5 5.9,1.1"/></svg>
<svg style="left:651.6px;top:806.8px" width="18" height="18" viewBox="0 0 18 18"><path class="ic" style="stroke-width:1.3" d="M4.100,.6V17.400M13.900,.6V17.400M.6,4.100H17.400M.6,13.900H17.400"/></svg>
<svg style="left:684px;top:813.500px" width="7" height="5" viewBox="0 0 7 5"><path class="ic" style="stroke-width:1.3" d="M1.1,1.1 3.5,3.5 5.9,1.1"/></svg>
<svg style="left:713.6px;top:806.8px" width="18" height="18" viewBox="0 0 18 18"><rect class="ic" style="stroke-width:1.3" x=".8" y=".8" width="16.200" height="16.200" rx="1.600"/></svg>
<svg style="left:746px;top:813.500px" width="7" height="5" viewBox="0 0 7 5"><path class="ic" style="stroke-width:1.3" d="M1.1,1.1 3.5,3.5 5.9,1.1"/></svg>
<svg style="left:775px;top:805.500px" width="21" height="21" viewBox="0 0 21 21"><g class="ic" style="stroke-width:1.25"><path d="M2.200,3.400 Q1.800,1.800 3.400,2.200 L12.500,5 Q13.800,5.400 14.400,6.600 L17.800,13.200 Q18.300,14.200 17.500,15 L15,17.500 Q14.200,18.300 13.200,17.800 L6.600,14.400 Q5.400,13.800 5,12.500Z"/><circle cx="9.600" cy="9.600" r="1.900"/><path d="M2.600,2.600 8.200,8.200"/></g></svg>
<svg style="left:808.500px;top:813.500px" width="7" height="5" viewBox="0 0 7 5"><path class="ic" style="stroke-width:1.3" d="M1.1,1.1 3.5,3.5 5.9,1.1"/></svg>
<svg style="left:837.500px;top:807px" width="18" height="18" viewBox="0 0 18 18"><path class="ic" style="stroke-width:1.3" d="M1.200,3.800V1.200H16.800V3.800M9,1.200V16.800M6,16.800H12"/></svg>
<svg style="left:881.4px;top:806.6px" width="18" height="18" viewBox="0 0 18 18"><path class="ic" style="stroke-width:1.3" d="M.9,17.100V9A8.100,8.100 0 1 1 9,17.100Z"/></svg>
<svg style="left:922px;top:804px" width="24" height="24" viewBox="0 0 24 24"><g class="ic" style="stroke-width:1.25"><path d="M10,3.400C10.600,3.400 11,3.900 11.200,4.700C12,8.300 13.400,9.900 16.600,10.700C17.600,11 17.600,12.400 16.600,12.700C13.400,13.500 12,15.100 11.200,18.700C10.900,19.800 9.100,19.800 8.800,18.700C8,15.100 6.600,13.500 3.400,12.700C2.400,12.400 2.400,11 3.400,10.700C6.600,9.900 8,8.300 8.800,4.700C9,3.900 9.400,3.400 10,3.400Z" transform="translate(-1.200,0)"/><circle cx="17.600" cy="4.600" r="1.800"/><path d="M17.400,16.400V21M15.100,18.700H19.700"/></g></svg>
<div class="vl" style="left:960px;top:789px;height:53px;background:#bcbcbc"></div>
<div class="abs" style="left:975.500px;top:803px;width:43px;height:25px;border-radius:6.500px;background:#c3c3c3"></div>
<div class="abs" style="left:975.500px;top:803px;width:24px;height:25px;border-radius:6px;background:#d1d1d1;box-shadow:0 0 0 .6px #bdbdbd,0 1px 1.500px rgba(0,0,0,.12)"></div>
<svg style="left:978.800px;top:810.300px" width="17.500" height="10.800" viewBox="0 0 14 9"><path class="ic" style="stroke-width:.95" d="M3.300,1 .8,4.500 3.300,8M10.700,1 13.200,4.500 10.700,8M8.200,.7 5.800,8.300"/></svg>
<!--TB-END-->

</div></div>

<!-- ================= PLUGIN MODAL ================= -->
<div id="modal">
<!--MODAL-BEGIN-->
<!-- plugin icon -->
<svg style="left:19.5px;top:18.7px" width="26.4" height="26.4" viewBox="0 0 26.4 26.4">
<defs><clipPath id="cpi"><circle cx="13.2" cy="13.2" r="13.2"/></clipPath></defs>
<g clip-path="url(#cpi)"><rect width="26.4" height="26.4" fill="#2bb060"/>
<path d="M3,0V26.4M10.200,0V26.400M17.200,0V26.400M24.200,0V26.400M0,3.200H26.400M0,10.400H26.400M0,17.400H26.400M0,24.200H26.400" stroke="#52d28c" stroke-width="1" fill="none"/>
<rect x="10.200" y="10.400" width="7" height="7" fill="#ffffff"/></g></svg>
<div class="t" style="left:59px;top:32.3px;font-size:18.4px;letter-spacing:.5px;color:#2a2a2a;-webkit-text-stroke:.25px #2a2a2a">Pixel Perfect</div>
<svg style="left:448.5px;top:23px" width="18" height="18" viewBox="0 0 18 18"><path d="M.6,.6 17.4,17.4M17.4,.6 .6,17.4" stroke="#2e2e2e" stroke-width="1.55" fill="none"/></svg>
<div class="hl" style="left:0;top:64px;width:490px;background:#e2e2e2"></div>
<div class="abs" style="left:20px;top:85px;width:450.5px;height:40.5px;border:1.3px solid #6f6f6f;border-radius:1px"></div>
<div class="t" style="left:245px;top:106px;transform:translate(-50%,-50%);font-size:17.6px;letter-spacing:.1px;color:#5e5e5e">Select layers to apply Pixel Perfect to</div>
<div class="abs" style="left:25.5px;top:146.8px;width:23px;height:23px;border:2px solid #707070;border-radius:2.5px"></div>
<div class="t bb" style="left:54px;top:159.5px;font-size:17.3px;letter-spacing:-.22px;color:#3a3a3a">Apply to Vector nodes</div>
<div class="abs" style="left:20px;top:207.5px;width:67.6px;height:49px;border-radius:4.5px;background:#33bfff"></div>
<div class="t" style="left:53.5px;top:232.5px;transform:translate(-50%,-50%);font-size:17.6px;letter-spacing:.1px;color:#fff;-webkit-text-stroke:.4px #fff">run</div>
<div class="abs" style="left:100px;top:207.5px;width:87px;height:49px;border-radius:4px;border:1.3px solid #d0d0d0;background:#fff"></div>
<div class="t" style="left:143.5px;top:232.3px;transform:translate(-50%,-50%);font-size:18.2px;letter-spacing:.1px;color:#4a4a4a">Close</div>
<!--MODAL-END-->
</div>

</body>
</html>
